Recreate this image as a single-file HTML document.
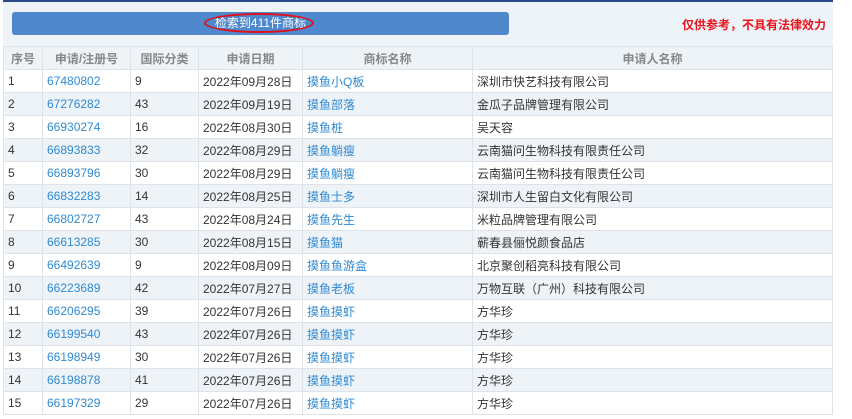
<!DOCTYPE html>
<html><head><meta charset="utf-8"><style>
body{margin:0;width:852px;height:419px;background:#fff;font-family:"Liberation Sans","Noto Sans CJK SC",sans-serif;font-size:12px;color:#333;overflow:hidden;position:relative}
.top{position:absolute;left:3px;top:0;width:830px;height:2px;background:#2a4a85}
.panel{position:absolute;left:3px;top:2px;width:830px;height:44px;background:#eef3f8}
.btn{position:absolute;left:12px;top:12px;width:497px;height:23px;background:#4f88cc;border-radius:3px;color:#fff;text-align:center;line-height:23px;font-size:12px}
.ell{position:absolute;left:204px;top:13px;width:110px;height:20px;border:2px solid #e0101a;border-radius:50%;box-sizing:border-box}
.warn{position:absolute;left:682px;top:16px;color:#e8141c;font-weight:bold;font-size:12px}
table{position:absolute;left:3px;top:46px;width:830px;border-collapse:collapse;table-layout:fixed}
td,th{border:1px solid #dde3e8;height:22px;padding:0 0 0 4px;white-space:nowrap;overflow:hidden}
th{background:#eef3f8;color:#888;font-weight:bold;text-align:center;padding:0}
tr:nth-child(odd) td{background:#eef3f8}
a{color:#2f8ad4;text-decoration:none}
</style></head><body>
<div class="top"></div><div class="panel"></div>
<div class="btn">检索到411件商标</div><div class="ell"></div>
<div class="warn">仅供参考，不具有法律效力</div>
<table>
<colgroup><col style="width:39px"><col style="width:88px"><col style="width:68px"><col style="width:104px"><col style="width:170px"><col></colgroup>
<tr><th>序号</th><th>申请/注册号</th><th>国际分类</th><th>申请日期</th><th>商标名称</th><th>申请人名称</th></tr>
<tr><td>1</td><td><a>67480802</a></td><td>9</td><td>2022年09月28日</td><td><a>摸鱼小Q板</a></td><td>深圳市快艺科技有限公司</td></tr>
<tr><td>2</td><td><a>67276282</a></td><td>43</td><td>2022年09月19日</td><td><a>摸鱼部落</a></td><td>金瓜子品牌管理有限公司</td></tr>
<tr><td>3</td><td><a>66930274</a></td><td>16</td><td>2022年08月30日</td><td><a>摸鱼桩</a></td><td>吴天容</td></tr>
<tr><td>4</td><td><a>66893833</a></td><td>32</td><td>2022年08月29日</td><td><a>摸鱼躺瘦</a></td><td>云南猫问生物科技有限责任公司</td></tr>
<tr><td>5</td><td><a>66893796</a></td><td>30</td><td>2022年08月29日</td><td><a>摸鱼躺瘦</a></td><td>云南猫问生物科技有限责任公司</td></tr>
<tr><td>6</td><td><a>66832283</a></td><td>14</td><td>2022年08月25日</td><td><a>摸鱼士多</a></td><td>深圳市人生留白文化有限公司</td></tr>
<tr><td>7</td><td><a>66802727</a></td><td>43</td><td>2022年08月24日</td><td><a>摸鱼先生</a></td><td>米粒品牌管理有限公司</td></tr>
<tr><td>8</td><td><a>66613285</a></td><td>30</td><td>2022年08月15日</td><td><a>摸鱼猫</a></td><td>蕲春县俪悦颜食品店</td></tr>
<tr><td>9</td><td><a>66492639</a></td><td>9</td><td>2022年08月09日</td><td><a>摸鱼鱼游盒</a></td><td>北京聚创稻亮科技有限公司</td></tr>
<tr><td>10</td><td><a>66223689</a></td><td>42</td><td>2022年07月27日</td><td><a>摸鱼老板</a></td><td>万物互联（广州）科技有限公司</td></tr>
<tr><td>11</td><td><a>66206295</a></td><td>39</td><td>2022年07月26日</td><td><a>摸鱼摸虾</a></td><td>方华珍</td></tr>
<tr><td>12</td><td><a>66199540</a></td><td>43</td><td>2022年07月26日</td><td><a>摸鱼摸虾</a></td><td>方华珍</td></tr>
<tr><td>13</td><td><a>66198949</a></td><td>30</td><td>2022年07月26日</td><td><a>摸鱼摸虾</a></td><td>方华珍</td></tr>
<tr><td>14</td><td><a>66198878</a></td><td>41</td><td>2022年07月26日</td><td><a>摸鱼摸虾</a></td><td>方华珍</td></tr>
<tr><td>15</td><td><a>66197329</a></td><td>29</td><td>2022年07月26日</td><td><a>摸鱼摸虾</a></td><td>方华珍</td></tr>
</table>
</body></html>
